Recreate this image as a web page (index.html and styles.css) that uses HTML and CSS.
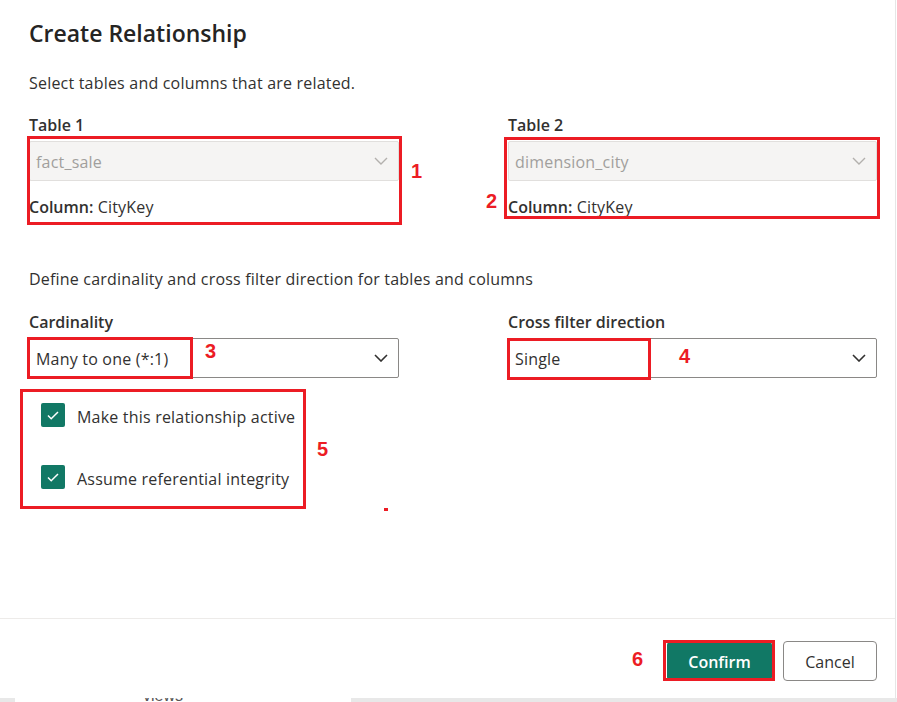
FILE: index.html
```html
<!DOCTYPE html>
<html>
<head>
<meta charset="utf-8">
<link rel="stylesheet" href="styles.css">
</head>
<body>
<div class="screen">
  <div class="dialog">
    <div class="content">
      <h1 class="title">Create Relationship</h1>
      <p class="desc">Select tables and columns that are related.</p>
      <div class="grid tables">
        <div class="field">
          <div class="label">Table 1</div>
          <div class="select disabled">
            <span>fact_sale</span>
            <svg class="chev" width="14" height="8" viewBox="0 0 14 8"><path d="M1 1l6 6 6-6" fill="none" stroke="currentColor" stroke-width="1.4"/></svg>
          </div>
          <div class="column"><b>Column:</b> CityKey</div>
        </div>
        <div class="field">
          <div class="label">Table 2</div>
          <div class="select disabled">
            <span>dimension_city</span>
            <svg class="chev" width="14" height="8" viewBox="0 0 14 8"><path d="M1 1l6 6 6-6" fill="none" stroke="currentColor" stroke-width="1.4"/></svg>
          </div>
          <div class="column"><b>Column:</b> CityKey</div>
        </div>
      </div>
      <p class="desc desc2">Define cardinality and cross filter direction for tables and columns</p>
      <div class="grid opts">
        <div class="field">
          <div class="label">Cardinality</div>
          <div class="select">
            <span>Many to one (*:1)</span>
            <svg class="chev" width="14" height="8" viewBox="0 0 14 8"><path d="M1 1l6 6 6-6" fill="none" stroke="currentColor" stroke-width="1.6"/></svg>
          </div>
        </div>
        <div class="field">
          <div class="label">Cross filter direction</div>
          <div class="select">
            <span>Single</span>
            <svg class="chev" width="14" height="8" viewBox="0 0 14 8"><path d="M1 1l6 6 6-6" fill="none" stroke="currentColor" stroke-width="1.6"/></svg>
          </div>
        </div>
      </div>
      <div class="checks">
        <label class="check"><span class="box"><svg width="24" height="24" viewBox="0 0 24 24"><path d="M7 12.5l3.2 3.2L17 9" fill="none" stroke="#fff" stroke-width="1.5"/></svg></span><span class="ctext">Make this relationship active</span></label>
        <label class="check"><span class="box"><svg width="24" height="24" viewBox="0 0 24 24"><path d="M7 12.5l3.2 3.2L17 9" fill="none" stroke="#fff" stroke-width="1.5"/></svg></span><span class="ctext">Assume referential integrity</span></label>
      </div>
    </div>
    <div class="footer">
      <button class="btn primary">Confirm</button>
      <button class="btn">Cancel</button>
    </div>

    <div class="mark m1"></div><span class="num n1">1</span>
    <div class="mark m2"></div><span class="num n2">2</span>
    <div class="mark m3"></div><span class="num n3">3</span>
    <div class="mark m4"></div><span class="num n4">4</span>
    <div class="mark m5"></div><span class="num n5">5</span>
    <div class="mark m6"></div><span class="num n6">6</span>
    <div class="dot"></div>
  </div>
  <div class="edge"></div>
</div>
<div class="under">
  <span class="u1"></span><span class="utext">views</span><span class="u2"></span>
</div>
</body>
</html>
```
FILE: styles.css
```css
html, body {
  margin: 0;
  padding: 0;
  background: #fff;
  overflow: hidden;
}
body {
  width: 897px;
  height: 702px;
  font-family: "Open Sans", "Noto Sans", sans-serif;
  color: #323130;
}
.screen {
  display: flex;
  height: 698px;
}
.dialog {
  position: relative;
  width: 895px;
  height: 698px;
  background: #fff;
  display: flex;
  flex-direction: column;
}
.edge {
  width: 2px;
  border-left: 1px solid #e6e6e6;
}
.content {
  flex: 1;
  padding: 0 18px 0 29px;
}
.title {
  margin: 17px 0 0;
  font-size: 23px;
  line-height: 32px;
  font-weight: 600;
  color: #252423;
}
.desc {
  margin: 24px 0 0;
  font-size: 16px;
  letter-spacing: 0.2px;
  line-height: 20px;
  color: #323130;
}
.grid {
  display: grid;
  grid-template-columns: 370px 369px;
  column-gap: 109px;
}
.tables { margin-top: 22px; }
.label {
  font-size: 16px;
  font-weight: 600;
  line-height: 20px;
  height: 20px;
  margin-bottom: 6px;
}
.select {
  box-sizing: border-box;
  height: 40px;
  border: 1px solid #8a8886;
  border-radius: 2px;
  display: flex;
  align-items: center;
  justify-content: space-between;
  padding: 2px 10px 0 6px;
  font-size: 16px;
  letter-spacing: 0.2px;
  color: #323130;
}
.select .chev { margin-top: -2px; }
.select.disabled {
  background: #f5f4f3;
  border-color: #e1dfdd;
  color: #a19f9d;
}
.select.disabled .chev { color: #b3b0ad; }
.chev { color: #323130; }
.column {
  margin-top: 16px;
  font-size: 16px;
  letter-spacing: 0.2px;
  line-height: 20px;
}
.column b { font-weight: 600; letter-spacing: 0; }
.desc2 { margin-top: 52px; }
.opts { margin-top: 23px; }
.checks {
  margin-top: 25px;
  padding-left: 12px;
  display: flex;
  flex-direction: column;
  gap: 38px;
}
.check {
  display: flex;
  align-items: center;
  gap: 12px;
  font-size: 16px;
  letter-spacing: 0.2px;
  line-height: 24px;
  height: 24px;
}
.ctext { padding-top: 2px; margin-bottom: -2px; }
.box {
  width: 24px;
  height: 24px;
  background: #117865;
  border-radius: 2px;
  display: block;
}
.box svg { display: block; }
.footer {
  height: 80px;
  border-top: 1px solid #edebe9;
  display: flex;
  justify-content: flex-end;
  align-items: flex-start;
  gap: 11px;
  padding: 22px 18px 0 0;
  box-sizing: border-box;
}
.btn {
  height: 40px;
  padding: 2px 15px 0;
  font-family: inherit;
  font-size: 16px;
  font-weight: 400;
  color: #323130;
  background: #fff;
  border: 1px solid #8a8886;
  border-radius: 4px;
  width: 94px;
}
.btn.primary {
  width: 105px;
  background: #117865;
  border-color: #117865;
  color: #fff;
  font-weight: 600;
}
.mark {
  position: absolute;
  box-sizing: border-box;
  border: 3px solid #ec1c24;
}
.m1 { left: 27px; top: 136px; width: 375px; height: 89px; }
.m2 { left: 504px; top: 137px; width: 376px; height: 82px; }
.m3 { left: 27px; top: 337px; width: 166px; height: 42px; }
.m4 { left: 507px; top: 338px; width: 144px; height: 42px; }
.m5 { left: 20px; top: 389px; width: 286px; height: 120px; }
.m6 { left: 663px; top: 640px; width: 112px; height: 41px; }
.num {
  position: absolute;
  font-family: "Liberation Sans", Arial, sans-serif;
  font-weight: 700;
  font-size: 20px;
  line-height: 20px;
  color: #ec1c24;
}
.n1 { left: 411px; top: 161px; }
.n2 { left: 486px; top: 191px; }
.n3 { left: 205px; top: 341px; }
.n4 { left: 679px; top: 346px; }
.n5 { left: 317px; top: 439px; }
.n6 { left: 632px; top: 649px; }
.dot {
  position: absolute;
  left: 384px; top: 508px;
  width: 4px; height: 3px;
  background: #ec1c24;
}
.under {
  height: 4px;
  display: flex;
  overflow: hidden;
  position: relative;
}
.u1 { width: 15px; background: #e8e8e8; }
.utext {
  width: 336px;
  font-family: "Liberation Sans", Arial, sans-serif;
  font-size: 16px;
  line-height: 4px;
  color: #555;
  padding-left: 128px;
  box-sizing: border-box;
  position: relative;
  top: -4px;
}
.u2 { flex: 1; background: #e8e8e8; }
```
